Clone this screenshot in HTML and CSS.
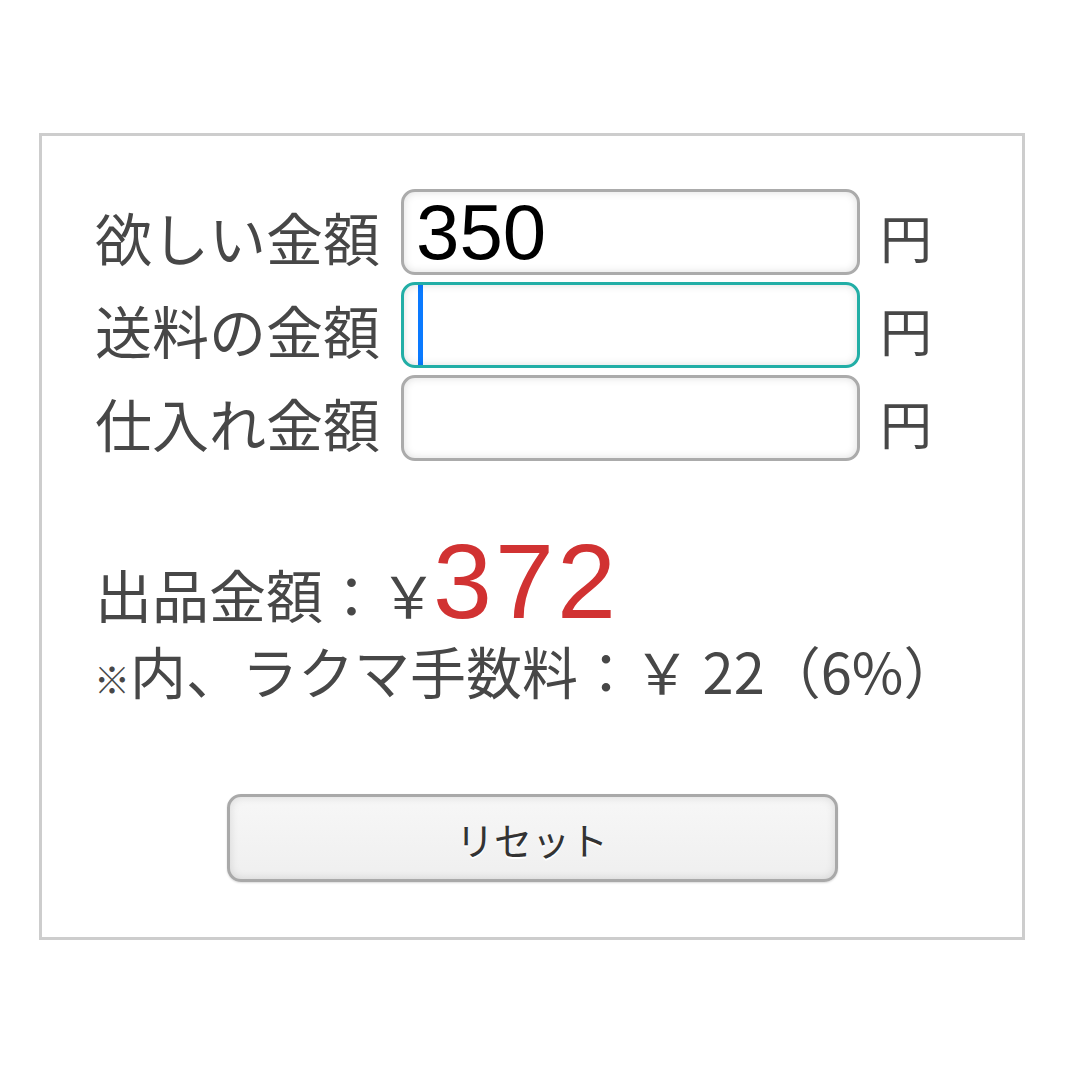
FILE: index.html
```html
<!DOCTYPE html>
<html lang="ja">
<head>
    <meta charset="UTF-8">
    <meta name="viewport" content="width=device-width, initial-scale=1.0">
    <title>ラクマ 出品金額計算</title>
    <link rel="stylesheet" href="styles.css">
</head>
<body>
    <div class="container">
        <form class="calc">
            <div class="row">
                <label for="want">欲しい金額</label>
                <input type="text" id="want" name="want" value="350">
                <span class="unit">円</span>
            </div>
            <div class="row">
                <label for="shipping">送料の金額</label>
                <input type="text" id="shipping" name="shipping" class="focused">
                <span class="unit">円</span>
            </div>
            <div class="row">
                <label for="cost">仕入れ金額</label>
                <input type="text" id="cost" name="cost">
                <span class="unit">円</span>
            </div>
        </form>
        <div class="result">
            <p class="price">出品金額：￥<span class="amount">372</span></p>
            <p class="fee"><span class="note">※</span>内、ラクマ手数料：￥ 22（6%）</p>
        </div>
        <div class="actions">
            <button type="button" id="reset">リセット</button>
        </div>
    </div>
</body>
</html>
```

FILE: styles.css
```css
body {
    margin: 0;
    padding: 133px 0 0 39px;
    background-color: #fff;
    font-family: "Noto Sans CJK JP", "Noto Sans", sans-serif;
    color: #474747;
}
.container {
    box-sizing: border-box;
    width: 986px;
    border: 3px solid #cdcdcd;
    padding: 53px 0 55px 53px;
}
.calc {
    display: flex;
    flex-direction: column;
    gap: 7px;
}
.row {
    display: flex;
    align-items: center;
    height: 86px;
}
.row label {
    width: 285px;
    font-size: 57px;
    line-height: 1;
    padding-top: 8px;
    margin-right: 21px;
    white-space: nowrap;
}
.row input {
    box-sizing: border-box;
    width: 459px;
    height: 86px;
    padding: 0 12px;
    border: 3px solid #ababab;
    border-radius: 14px;
    background-color: #fff;
    box-shadow: inset 0 0 9px rgba(0, 0, 0, 0.13);
    font-family: "Liberation Sans", Arial, sans-serif;
    font-size: 78px;
    color: #000;
    outline: none;
}
.row input.focused {
    border-color: #22aea6;
    background: linear-gradient(#0a7aff, #0a7aff) no-repeat 14px 0 / 5px 100%, #fff;
}
.unit {
    margin-left: 20px;
    font-size: 52px;
    line-height: 1;
    padding-top: 10px;
}
.result {
    margin-top: 65px;
}
.price {
    margin: 0;
    font-size: 57px;
    line-height: 110px;
    white-space: nowrap;
}
.amount {
    margin-left: -4px;
    letter-spacing: 3px;
    font-family: "Liberation Sans", Arial, sans-serif;
    font-size: 106px;
    color: #d13232;
}
.fee {
    margin: -16px 0 0 -1px;
    font-size: 56px;
    line-height: 76px;
    white-space: nowrap;
}
.note {
    font-size: 36px;
    font-weight: bold;
}
.actions {
    display: flex;
    justify-content: center;
    margin-top: 78px;
    padding-right: 53px;
}
#reset {
    width: 611px;
    height: 88px;
    border: 3px solid #a9a9a9;
    border-radius: 14px;
    background: linear-gradient(#f7f7f7, #efefef);
    box-shadow: inset 0 0 10px rgba(0, 0, 0, 0.12), 0 1px 2px rgba(0, 0, 0, 0.15);
    font-family: "Noto Sans CJK JP", sans-serif;
    font-size: 38px;
    color: #333;
    text-shadow: 0 2px 0 #fff;
    cursor: pointer;
}
```
